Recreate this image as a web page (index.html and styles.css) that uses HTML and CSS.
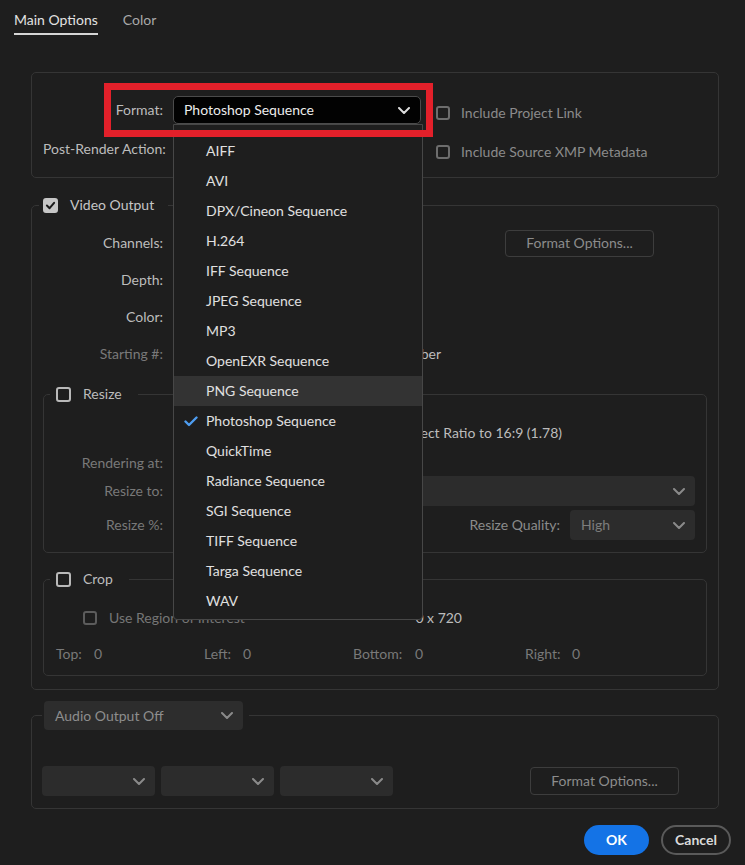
FILE: index.html
```html
<!DOCTYPE html>
<html lang="en">
<head>
<meta charset="utf-8">
<title>Export Settings</title>
<link rel="stylesheet" href="styles.css">
</head>
<body>
<nav class="tabs">
  <span class="tab active">Main Options</span>
  <span class="tab">Color</span>
</nav>

<section class="panel top-panel">
  <div class="form-grid">
    <span class="lbl">Format:</span>
    <div class="format-wrap">
      <div class="select select-format">
        <span>Photoshop Sequence</span>
        <svg class="chev" viewBox="0 0 12 7"><polyline points="1,1 6,6 11,1"/></svg>
      </div>
      <ul class="menu">
        <li>AIFF</li>
        <li>AVI</li>
        <li>DPX/Cineon Sequence</li>
        <li>H.264</li>
        <li>IFF Sequence</li>
        <li>JPEG Sequence</li>
        <li>MP3</li>
        <li>OpenEXR Sequence</li>
        <li class="hover">PNG Sequence</li>
        <li class="selected"><svg class="tick" viewBox="0 0 14 11"><polyline points="1.5,5.5 5,9 12.5,1.5"/></svg>Photoshop Sequence</li>
        <li>QuickTime</li>
        <li>Radiance Sequence</li>
        <li>SGI Sequence</li>
        <li>TIFF Sequence</li>
        <li>Targa Sequence</li>
        <li>WAV</li>
      </ul>
    </div>
    <label class="check dim top-check"><span class="cb"></span>Include Project Link</label>

    <span class="lbl">Post-Render Action:</span>
    <div class="select"><span></span><svg class="chev" viewBox="0 0 12 7"><polyline points="1,1 6,6 11,1"/></svg></div>
    <label class="check dim top-check"><span class="cb"></span>Include Source XMP Metadata</label>
  </div>
</section>

<div class="annotation"></div>

<fieldset class="group video">
  <legend class="legend video-legend"><span class="cb checked"><svg viewBox="0 0 12 10"><polyline points="2,5 5,8 10,2"/></svg></span>Video Output</legend>
  <div class="video-body">
    <div class="form-grid video-grid">
      <span class="lbl">Channels:</span>
      <div class="select"><span></span><svg class="chev" viewBox="0 0 12 7"><polyline points="1,1 6,6 11,1"/></svg></div>
      <div class="col3"><button class="btn-outline fmt-top">Format Options...</button></div>

      <span class="lbl">Depth:</span>
      <div class="select"><span></span><svg class="chev" viewBox="0 0 12 7"><polyline points="1,1 6,6 11,1"/></svg></div>
      <span></span>

      <span class="lbl">Color:</span>
      <div class="select"><span></span><svg class="chev" viewBox="0 0 12 7"><polyline points="1,1 6,6 11,1"/></svg></div>
      <span></span>

      <span class="lbl dim">Starting #:</span>
      <div class="start-note">Number</div>
      <span></span>
    </div>

    <fieldset class="group sub resize">
      <legend class="legend sub-legend"><span class="cb bright"></span>Resize</legend>
      <div class="resize-body">
        <div class="row r-lock"><span></span><div class="lock-note">Aspect Ratio to 16:9 (1.78)</div></div>
        <div class="row r-render"><span class="lbl dim">Rendering at:</span><span></span></div>
        <div class="row r-to"><span class="lbl dim">Resize to:</span>
          <div class="select wide"><span></span><svg class="chev" viewBox="0 0 12 7"><polyline points="1,1 6,6 11,1"/></svg></div>
        </div>
        <div class="row r-pct"><span class="lbl dim">Resize %:</span>
          <div class="quality">
            <span class="lbl-q">Resize Quality:</span>
            <div class="select q-select"><span>High</span><svg class="chev" viewBox="0 0 12 7"><polyline points="1,1 6,6 11,1"/></svg></div>
          </div>
        </div>
      </div>
    </fieldset>

    <fieldset class="group sub crop">
      <legend class="legend sub-legend"><span class="cb bright"></span>Crop</legend>
      <div class="crop-body">
        <div class="roi-row">
          <label class="check dimmer"><span class="cb"></span>Use Region of Interest</label>
          <span class="roi-size">0 x 720</span>
        </div>
        <div class="crop-row">
          <span class="c-top">Top:</span><span class="num">0</span>
          <span class="c-left">Left:</span><span class="num">0</span>
          <span class="c-bottom">Bottom:</span><span class="num">0</span>
          <span class="c-right">Right:</span><span class="num">0</span>
        </div>
      </div>
    </fieldset>
  </div>
</fieldset>

<fieldset class="group audio">
  <legend class="legend audio-legend">
    <div class="select audio-select"><span>Audio Output Off</span><svg class="chev" viewBox="0 0 12 7"><polyline points="1,1 6,6 11,1"/></svg></div>
  </legend>
  <div class="audio-body">
    <div class="select small"><span></span><svg class="chev" viewBox="0 0 12 7"><polyline points="1,1 6,6 11,1"/></svg></div>
    <div class="select small"><span></span><svg class="chev" viewBox="0 0 12 7"><polyline points="1,1 6,6 11,1"/></svg></div>
    <div class="select small"><span></span><svg class="chev" viewBox="0 0 12 7"><polyline points="1,1 6,6 11,1"/></svg></div>
    <button class="btn-outline fmt-audio">Format Options...</button>
  </div>
</fieldset>

<footer class="footer">
  <button class="btn-ok">OK</button>
  <button class="btn-cancel">Cancel</button>
</footer>
</body>
</html>
```

FILE: styles.css
```css
* { box-sizing: border-box; }
html, body { margin: 0; height: 100%; }
body {
  background: #1e1e1e;
  color: #bcbcbc;
  font-family: Lato, "Open Sans", "Liberation Sans", sans-serif;
  font-size: 14px;
  line-height: 20px;
  position: relative;
  overflow: hidden;
}

/* Tabs */
.tabs { display: flex; gap: 25px; padding: 10px 0 0 14px; }
.tab { color: #a9a9a9; padding-bottom: 3px; border-bottom: 2px solid transparent; }
.tab.active { color: #e2e2e2; border-bottom-color: #d6d6d6; }

/* Panels */
.panel {
  margin: 37px 26px 0 31px;
  border: 1px solid #353535;
  border-radius: 5px;
}
.top-panel { padding: 23px 11px 14px; }

.form-grid {
  display: grid;
  grid-template-columns: 120px 248px auto;
  column-gap: 10px;
  grid-auto-rows: 28px;
  row-gap: 11px;
  align-items: center;
}
.lbl { text-align: right; white-space: nowrap; color: #bcbcbc; }
.dim { color: #797979; }
.lbl.dim { color: #797979; }

/* Select */
.select {
  display: flex;
  align-items: center;
  justify-content: space-between;
  height: 28px;
  border-radius: 4px;
  background: #2c2c2c;
  color: #8a8a8a;
  padding: 0 10px 0 11px;
  white-space: nowrap;
}
.chev { width: 12px; height: 7px; flex: none; fill: none; stroke: #8a8a8a; stroke-width: 2; stroke-linecap: round; stroke-linejoin: round; }
.format-wrap { position: relative; height: 28px; }
.select-format {
  background: #020202;
  border: 1px solid #4b4b4b;
  border-radius: 5px;
  color: #ececec;
  padding-left: 10px;
}
.select-format .chev { stroke: #dcdcdc; }

/* Dropdown menu (overlay) */
.menu {
  position: absolute;
  top: 28px;
  left: 0;
  width: 250px;
  height: 496px;
  margin: 0;
  padding: 11px 0 0;
  list-style: none;
  background: #1e1e1e;
  border: 1px solid #474747;
  border-radius: 0 0 4px 4px;
  z-index: 5;
}
.menu li {
  position: relative;
  height: 30px;
  line-height: 30px;
  padding-left: 32px;
  color: #e0e0e0;
  white-space: nowrap;
}
.menu li.hover { background: #333333; }
.tick {
  position: absolute;
  left: 10px;
  top: 10px;
  width: 14px;
  height: 11px;
  fill: none;
  stroke: #4e9df0;
  stroke-width: 2.4;
  stroke-linecap: round;
  stroke-linejoin: round;
}

/* Annotation highlight */
.annotation {
  position: absolute;
  left: 104px;
  top: 83px;
  width: 329px;
  height: 54px;
  border: 7px solid #e3202a;
  z-index: 10;
  pointer-events: none;
}

/* Checkboxes */
.check { display: flex; align-items: center; gap: 11px; white-space: nowrap; }
.check.dim { color: #8b8b8b; }
.check.dimmer { color: #767676; gap: 12px; }
.top-check { margin-left: 5px; margin-top: 6px; }
.cb {
  width: 14px;
  height: 14px;
  flex: none;
  border: 2px solid #6d6d6d;
  border-radius: 3px;
  display: inline-flex;
  align-items: center;
  justify-content: center;
}
.check.dimmer .cb { border-color: #5c5c5c; }
.cb.bright { border-color: #b9b9b9; }
.cb.checked { width: 15px; height: 15px; background: #c6c6c6; border-color: #c6c6c6; }
.cb.checked svg { width: 11px; height: 9px; fill: none; stroke: #1a1a1a; stroke-width: 2.2; stroke-linecap: round; stroke-linejoin: round; }

/* Fieldsets */
.group {
  margin: 0;
  padding: 0;
  min-width: 0;
  border: 1px solid #353535;
  border-radius: 5px;
}
.legend { display: flex; align-items: center; height: 20px; padding: 0; }
.video { margin: 17px 26px 0 31px; }
.video-legend { margin-left: 7px; padding: 0 14px 0 4px; gap: 12px; color: #c6c6c6; }
.video-body { padding: 14px 11px 13px; }
.video-grid { row-gap: 9px; }
.col3 { display: flex; align-items: center; }
.fmt-top { margin-left: 74px; width: 149px; height: 27px; }
.start-note { width: 268px; text-align: right; white-space: nowrap; color: #bcbcbc; }

.sub-legend { margin-left: 6px; padding: 0 16px 0 6px; gap: 12px; color: #bcbcbc; }
.sub-legend .cb { width: 15px; height: 15px; }
.resize { margin-top: 16px; }
.resize-body { padding: 16px 11px 12px 0; }
.row { display: grid; grid-template-columns: 119px 1fr; column-gap: 10px; align-items: center; }
.r-lock { height: 26px; }
.r-render { height: 26px; margin-top: 4px; }
.r-to { height: 30px; }
.r-pct { height: 30px; margin-top: 4px; }
.r-to .select, .r-pct .select { height: 30px; }
.lock-note { width: 389px; text-align: right; white-space: nowrap; color: #bcbcbc; }
.quality { display: flex; align-items: center; justify-content: flex-end; gap: 10px; }
.lbl-q { color: #8b8b8b; }
.q-select { width: 125px; }
.q-select span { color: #7d7d7d; }

.crop { margin-top: 16px; }
.crop-body { padding: 16px 11px 8px 12px; }
.roi-row { display: flex; align-items: center; height: 26px; margin-left: 27px; width: 379px; }
.roi-size { margin-left: auto; color: #bcbcbc; }
.crop-row { display: flex; align-items: center; gap: 10px; height: 26px; margin-top: 10px; color: #797979; }
.crop-row .num { width: 100px; }
.c-top { width: 28px; }
.c-left { width: 29px; }
.c-bottom { width: 52px; }
.c-right { width: 37px; }

/* Buttons */
button { font: inherit; cursor: default; }
.btn-outline {
  background: transparent;
  border: 1px solid #3d3d3d;
  border-radius: 4px;
  color: #8c8c8c;
  padding: 0;
}

/* Audio */
.audio { margin: 11px 26px 0 31px; }
.audio-legend { margin-left: 10px; padding: 0 6px 0 2px; height: 29px; }
.audio-select { width: 199px; height: 29px; padding-left: 11px; color: #8e8e8e; background: #2d2d2d; }
.audio-body { display: flex; align-items: center; gap: 6px; padding: 36px 10px 12px; }
.select.small { width: 113px; height: 30px; }
.fmt-audio { margin-left: auto; margin-right: 29px; width: 149px; height: 28px; }

/* Footer */
.footer { display: flex; justify-content: flex-end; gap: 12px; margin-top: 16px; padding-right: 14px; }
.btn-ok {
  width: 65px; height: 30px;
  border: none; border-radius: 15px;
  background: #1473e6; color: #fff; font-weight: 700;
}
.btn-cancel {
  width: 70px; height: 30px;
  border: 2px solid #5a5a5a; border-radius: 15px;
  background: transparent; color: #dadada; font-weight: 700;
}
```
